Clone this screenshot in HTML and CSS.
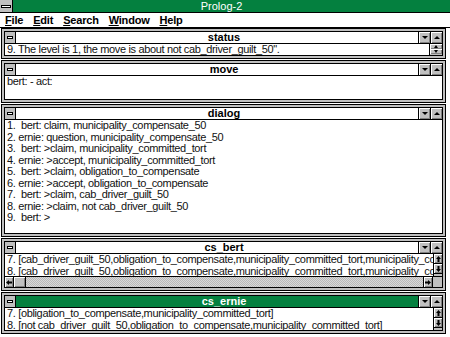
FILE: index.html
```html
<!DOCTYPE html>
<html lang="en">
<head>
    <meta charset="UTF-8">
    <title>Prolog-2</title>
    <link rel="stylesheet" href="styles.css">
</head>
<body>
    <div class="titlebar">
        <span class="app-sys"><i></i></span>
        <span class="app-title">Prolog-2</span>
    </div>
    <div class="menubar">
        <span><u>F</u>ile</span>
        <span><u>E</u>dit</span>
        <span><u>S</u>earch</span>
        <span><u>W</u>indow</span>
        <span><u>H</u>elp</span>
    </div>

    <div class="mdi">
        <!-- status -->
        <div class="win status">
            <div class="frame">
                <div class="caption">
                    <span class="sys"><i></i></span>
                    <span class="cap-text">status</span>
                    <span class="cbtn"><b class="tri-down"></b></span>
                    <span class="cbtn"><b class="tri-up"></b></span>
                </div>
                <div class="client">
                    <div class="lines">9. The level is 1, the move is about not cab_driver_guilt_50".</div>
                    <div class="vscroll wide">
                        <span class="sarrow"><b class="tri-up"></b></span>
                        <span class="sarrow"><b class="tri-down"></b></span>
                    </div>
                </div>
            </div>
        </div>

        <!-- move -->
        <div class="win move">
            <div class="frame">
                <div class="caption">
                    <span class="sys"><i></i></span>
                    <span class="cap-text">move</span>
                    <span class="cbtn"><b class="tri-down"></b></span>
                    <span class="cbtn"><b class="tri-up"></b></span>
                </div>
                <div class="client">
                    <div class="lines">bert: - act:</div>
                </div>
            </div>
        </div>

        <!-- dialog -->
        <div class="win dialog">
            <div class="frame">
                <div class="caption">
                    <span class="sys"><i></i></span>
                    <span class="cap-text">dialog</span>
                    <span class="cbtn"><b class="tri-down"></b></span>
                    <span class="cbtn"><b class="tri-up"></b></span>
                </div>
                <div class="client">
                    <div class="lines">
                        <div>1.&nbsp; bert: claim, municipality_compensate_50</div>
                        <div>2. ernie: question, municipality_compensate_50</div>
                        <div>3.&nbsp; bert: &gt;claim, municipality_committed_tort</div>
                        <div>4. ernie: &gt;accept, municipality_committed_tort</div>
                        <div>5.&nbsp; bert: &gt;claim, obligation_to_compensate</div>
                        <div>6. ernie: &gt;accept, obligation_to_compensate</div>
                        <div>7.&nbsp; bert: &gt;claim, cab_driver_guilt_50</div>
                        <div>8. ernie: &gt;claim, not cab_driver_guilt_50</div>
                        <div>9.&nbsp; bert: &gt;</div>
                    </div>
                </div>
            </div>
        </div>

        <!-- cs_bert -->
        <div class="win cs-bert">
            <div class="frame">
                <div class="caption">
                    <span class="sys"><i></i></span>
                    <span class="cap-text">cs_bert</span>
                    <span class="cbtn"><b class="tri-down"></b></span>
                    <span class="cbtn"><b class="tri-up"></b></span>
                </div>
                <div class="client">
                    <div class="lines">
                        <div>7. [cab_driver_guilt_50,obligation_to_compensate,municipality_committed_tort,municipality_committed_tort]</div>
                        <div>8. [cab_driver_guilt_50,obligation_to_compensate,municipality_committed_tort,municipality_committed_tort]</div>
                    </div>
                    <div class="vscroll">
                        <span class="sarrow"><svg width="5" height="6" viewBox="0 0 5 6"><path d="M2.5 0L5 3H3.5V6H1.5V3H0Z" fill="#000"/></svg></span>
                        <span class="sarrow"><svg width="5" height="6" viewBox="0 0 5 6"><path d="M2.5 6L5 3H3.5V0H1.5V3H0Z" fill="#000"/></svg></span>
                    </div>
                </div>
                <div class="hscroll">
                    <span class="harrow"><svg width="6" height="5" viewBox="0 0 6 5"><path d="M0 2.5L3 0V1.5H6V3.5H3V5Z" fill="#000"/></svg></span>
                    <span class="thumb"></span>
                    <span class="track"></span>
                    <span class="harrow"><svg width="6" height="5" viewBox="0 0 6 5"><path d="M6 2.5L3 0V1.5H0V3.5H3V5Z" fill="#000"/></svg></span>
                    <span class="corner"></span>
                </div>
            </div>
        </div>

        <!-- cs_ernie (active) -->
        <div class="win cs-ernie">
            <div class="frame">
                <div class="caption active">
                    <span class="sys"><i></i></span>
                    <span class="cap-text">cs_ernie</span>
                    <span class="cbtn"><b class="tri-down"></b></span>
                    <span class="cbtn"><b class="tri-up"></b></span>
                </div>
                <div class="client">
                    <div class="lines">
                        <div>7. [obligation_to_compensate,municipality_committed_tort]</div>
                        <div>8. [not cab_driver_guilt_50,obligation_to_compensate,municipality_committed_tort]</div>
                    </div>
                    <div class="vscroll">
                        <span class="sarrow"><svg width="5" height="6" viewBox="0 0 5 6"><path d="M2.5 0L5 3H3.5V6H1.5V3H0Z" fill="#000"/></svg></span>
                        <span class="sarrow"><svg width="5" height="6" viewBox="0 0 5 6"><path d="M2.5 6L5 3H3.5V0H1.5V3H0Z" fill="#000"/></svg></span>
                    </div>
                </div>
            </div>
        </div>
    </div>
</body>
</html>
```

FILE: styles.css
```css
* {
    box-sizing: border-box;
}
body {
    margin: 0;
    width: 450px;
    height: 337px;
    overflow: hidden;
    background: #fff;
    font-family: "Liberation Sans", Arial, sans-serif;
    font-size: 11px;
    color: #111;
}

/* application caption */
.titlebar {
    height: 13px;
    display: flex;
    background: #04803f;
    border-bottom: 1px solid #000;
}
.app-sys {
    width: 13px;
    background: #c0c0c0;
    border-right: 1px solid #000;
    display: flex;
    align-items: center;
    justify-content: center;
}
.app-sys i {
    width: 10px;
    height: 3px;
    background: #fff;
    border: 1px solid #000;
}
.app-title {
    flex: 1;
    text-align: center;
    color: #fff;
    line-height: 12px;
    padding-right: 20px;
}

/* menu */
.menubar {
    height: 15px;
    display: flex;
    gap: 10px;
    padding-left: 5px;
    align-items: center;
    font-weight: bold;
    letter-spacing: -0.2px;
    border-bottom: 1px solid #000;
    color: #000;
}

/* MDI client area */
.mdi {
    display: flex;
    flex-direction: column;
    gap: 1px;
    padding: 0 4px 0 1px;
}
.win {
    border: 1px solid #000;
    background: #c0c0c0;
    padding: 2px;
}
.frame {
    height: 100%;
    border: 1px solid #000;
    background: #fff;
    display: flex;
    flex-direction: column;
}
.status { height: 31px; }
.move { height: 43px; }
.dialog { height: 133px; }
.cs-bert { height: 53px; }
.cs-ernie { height: 42px; }

.caption {
    height: 12px;
    flex: none;
    display: flex;
    border-bottom: 1px solid #000;
    background: #fff;
    color: #000;
}
.caption.active {
    background: #04803f;
    color: #fff;
}
.sys {
    width: 11px;
    background: #c0c0c0;
    border-right: 1px solid #000;
    display: flex;
    align-items: center;
    justify-content: center;
}
.sys i {
    width: 6px;
    height: 3px;
    background: #fff;
    border: 1px solid #000;
}
.cap-text {
    flex: 1;
    text-align: center;
    font-weight: bold;
    line-height: 11px;
    padding-left: 14px;
}
.cbtn {
    width: 12px;
    background: #c0c0c0;
    border-left: 1px solid #000;
    box-shadow: inset 1px 1px #fff, inset -1px -1px #808080;
    display: flex;
    align-items: center;
    justify-content: center;
}
.tri-down, .tri-up {
    width: 0;
    height: 0;
    border-left: 3px solid transparent;
    border-right: 3px solid transparent;
}
.tri-down {
    border-top: 3px solid #000;
}
.tri-up {
    border-bottom: 3px solid #000;
}

.client {
    flex: 1;
    display: flex;
    min-height: 0;
}
.lines {
    flex: 1;
    padding-left: 2px;
    white-space: nowrap;
    overflow: hidden;
    line-height: 11.5px;
    letter-spacing: -0.35px;
}

/* scroll bars */
.vscroll {
    width: 9px;
    flex: none;
    display: flex;
    flex-direction: column;
    border-left: 1px solid #000;
    background: #c0c0c0;
}
.vscroll.wide {
    width: 13px;
}
.sarrow {
    height: 10px;
    display: flex;
    align-items: center;
    justify-content: center;
    background: #c0c0c0;
    border-bottom: 1px solid #000;
    box-shadow: inset 1px 1px #fff, inset -1px -1px #808080;
}
.vscroll.wide .sarrow {
    height: 5px;
    border-bottom: none;
}
.vscroll.wide .tri-up, .vscroll.wide .tri-down {
    border-left-width: 2px;
    border-right-width: 2px;
}

.hscroll {
    height: 11px;
    flex: none;
    display: flex;
    border-top: 1px solid #000;
}
.harrow {
    width: 9px;
    background: #c0c0c0;
    display: flex;
    align-items: center;
    justify-content: center;
    box-shadow: inset 1px 1px #fff, inset -1px -1px #808080;
    border-right: 1px solid #000;
}
.thumb {
    width: 12px;
    background: #c0c0c0;
    border-right: 1px solid #000;
    box-shadow: inset 1px 1px #fff, inset -1px -1px #808080;
}
.track {
    flex: 1;
    background: repeating-conic-gradient(#b8b8b8 0 25%, #d8d8d8 0 50%) 0 0 / 2px 2px;
    border-right: 1px solid #000;
}
.corner {
    width: 9px;
    background: #c0c0c0;
}
```
